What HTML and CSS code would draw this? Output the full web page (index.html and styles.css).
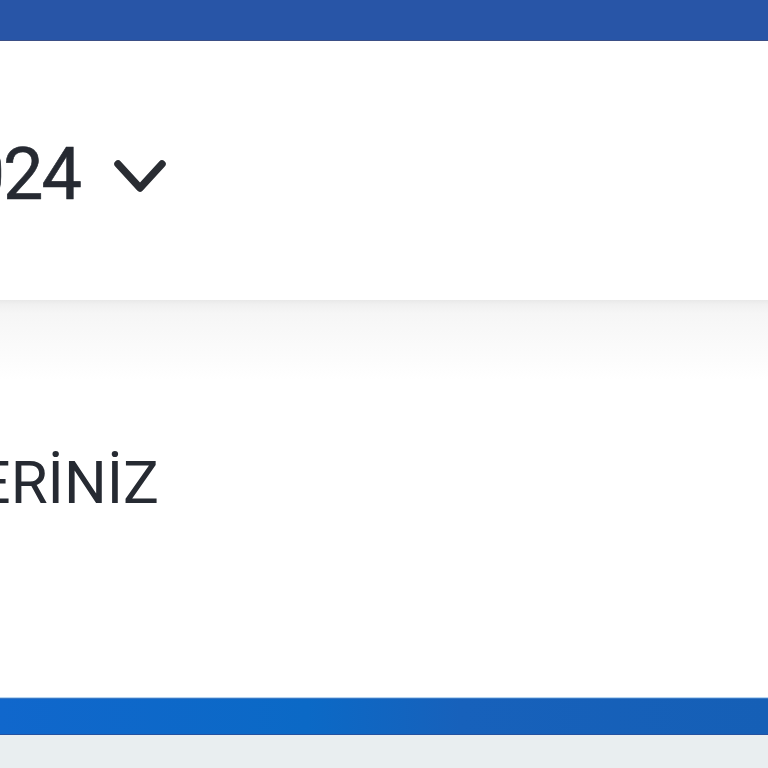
FILE: index.html
```html
<!DOCTYPE html>
<html lang="tr">
<head>
<meta charset="utf-8">
<title>Bilgileriniz</title>
<link rel="stylesheet" href="styles.css">
</head>
<body>
  <header class="topbar"></header>
  <section class="date-card">
    <div class="date-row">
      <div class="year-clip"><span class="year">2024</span></div>
      <button class="chevron" aria-label="Yıl seç">
        <svg width="56" height="40" viewBox="0 0 56 40"><polyline points="6,6 28,30 50,6" fill="none" stroke="#2a2d33" stroke-width="7.5" stroke-linecap="round" stroke-linejoin="round"/></svg>
      </button>
    </div>
  </section>
  <main class="content">
    <div class="title-clip"><h1 class="title">BİLGİLERİNİZ</h1></div>
  </main>
  <div class="bluebar"></div>
  <footer class="footer"></footer>
</body>
</html>
```
FILE: styles.css
```css
html, body {
  margin: 0;
  padding: 0;
  overflow: hidden;
  background: #ffffff;
  font-family: Roboto, "Noto Sans", "Liberation Sans", sans-serif;
  color: #262a32;
}

.topbar {
  height: 40px;
  background: #2855a7;
  border-bottom: 1px solid #3b4f86;
  box-shadow: 0 1px 0 #c9dbe9;
}

.date-card {
  height: 259px;
  box-sizing: border-box;
  padding-top: 98px;
  background: #ffffff;
}

.date-row {
  display: flex;
  align-items: center;
}

.year-clip {
  width: 82px;
  display: flex;
  justify-content: flex-end;
  flex: none;
}

.year {
  font-size: 72px;
  line-height: 1;
  font-weight: 400;
  letter-spacing: -2px;
  padding-right: 2px;
  white-space: nowrap;
  -webkit-text-stroke: 0.6px #262a32;
}

.chevron {
  margin-left: 30px;
  margin-top: 6px;
  padding: 0;
  border: 0;
  background: none;
  display: flex;
}

.content {
  height: 398px;
  box-sizing: border-box;
  padding-top: 153px;
  background: linear-gradient(#e9e9e9 0px, #f1f1f1 5px, #f6f6f6 14px, #fcfcfc 60px, #ffffff 80px);
}

.title-clip {
  width: 159px;
  display: flex;
  justify-content: flex-end;
}

.title {
  margin: 0;
  font-size: 60px;
  line-height: 1;
  font-weight: 400;
  white-space: nowrap;
}

.bluebar {
  height: 35px;
  background: linear-gradient(90deg, #1067cc 0%, #0b69c6 40%, #1761bb 60%, #155fb6 100%);
  border-top: 1px solid #3a78c4;
  border-bottom: 1px solid #2452a0;
  box-shadow: 0 -1px 0 #b6d6f2, 0 1px 0 #cfe4f2;
}

.footer {
  height: 40px;
  background: #e9eef0;
}
```
